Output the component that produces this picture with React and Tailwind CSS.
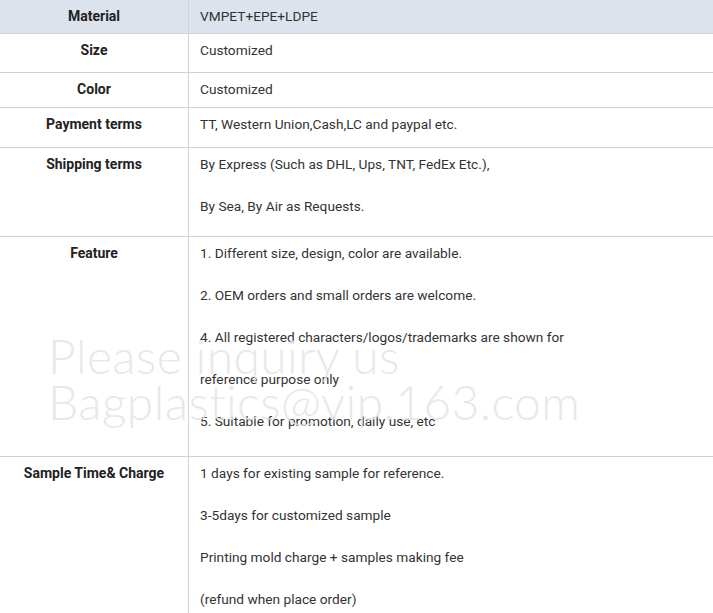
import React from "react";

const rows = [
  { label: "Size", lines: ["Customized"], h: "h-[39px]" },
  { label: "Color", lines: ["Customized"], h: "h-[35px]" },
  { label: "Payment terms", lines: ["TT, Western Union,Cash,LC and paypal etc."], h: "h-[40px]" },
  {
    label: "Shipping terms",
    lines: ["By Express (Such as DHL, Ups, TNT, FedEx Etc.),", "By Sea, By Air as Requests."],
    h: "h-[89px]",
  },
  {
    label: "Feature",
    lines: [
      "1. Different size, design, color are available.",
      "2. OEM orders and small orders are welcome.",
      "4. All registered characters/logos/trademarks are shown for",
      "reference purpose only",
      "5. Suitable for promotion, daily use, etc",
    ],
    h: "h-[220px]",
  },
  {
    label: "Sample Time& Charge",
    lines: [
      "1 days for existing sample for reference.",
      "3-5days for customized sample",
      "Printing mold charge + samples making fee",
      "(refund when place order)",
    ],
    h: "h-[170px]",
  },
];

export default function App() {
  return (
    <div
      className="relative w-[713px] h-[613px] overflow-hidden bg-white text-[#333]"
      style={{ fontFamily: "Roboto, 'Liberation Sans', sans-serif" }}
    >
      <div className="flex h-[34px] bg-[#dde3ed] border-b border-[#d2d2d2]">
        <div className="w-[189px] shrink-0 border-r border-[#d2d2d2] text-center text-[14px] font-bold text-[#222] pt-[6px] leading-[20px]">
          Material
        </div>
        <div className="pl-[11px] pt-[6px] text-[13.7px] leading-[20px]">VMPET+EPE+LDPE</div>
      </div>
      {rows.map((r) => (
        <div key={r.label} className={`flex ${r.h} border-b border-[#d2d2d2]`}>
          <div className="w-[189px] shrink-0 border-r border-[#d2d2d2] text-center text-[14px] font-bold text-[#222] pt-[6px] leading-[20px]">
            {r.label}
          </div>
          <div className="pl-[11px] pt-[6px] flex flex-col gap-[22px] text-[13.7px]">
            {r.lines.map((l, i) => (
              <div key={i} className="leading-[20px]">
                {l}
              </div>
            ))}
          </div>
        </div>
      ))}
      <div
        className="absolute left-[48px] top-[333px] text-[#e2e2e2]/80 font-light text-[48px] leading-[46px] tracking-[0.4px] pointer-events-none"
        style={{ fontFamily: "Lato, 'Open Sans', sans-serif" }}
      >
        <div>Please inquiry us</div>
        <div>Bagplastics@vip.163.com</div>
      </div>
    </div>
  );
}
